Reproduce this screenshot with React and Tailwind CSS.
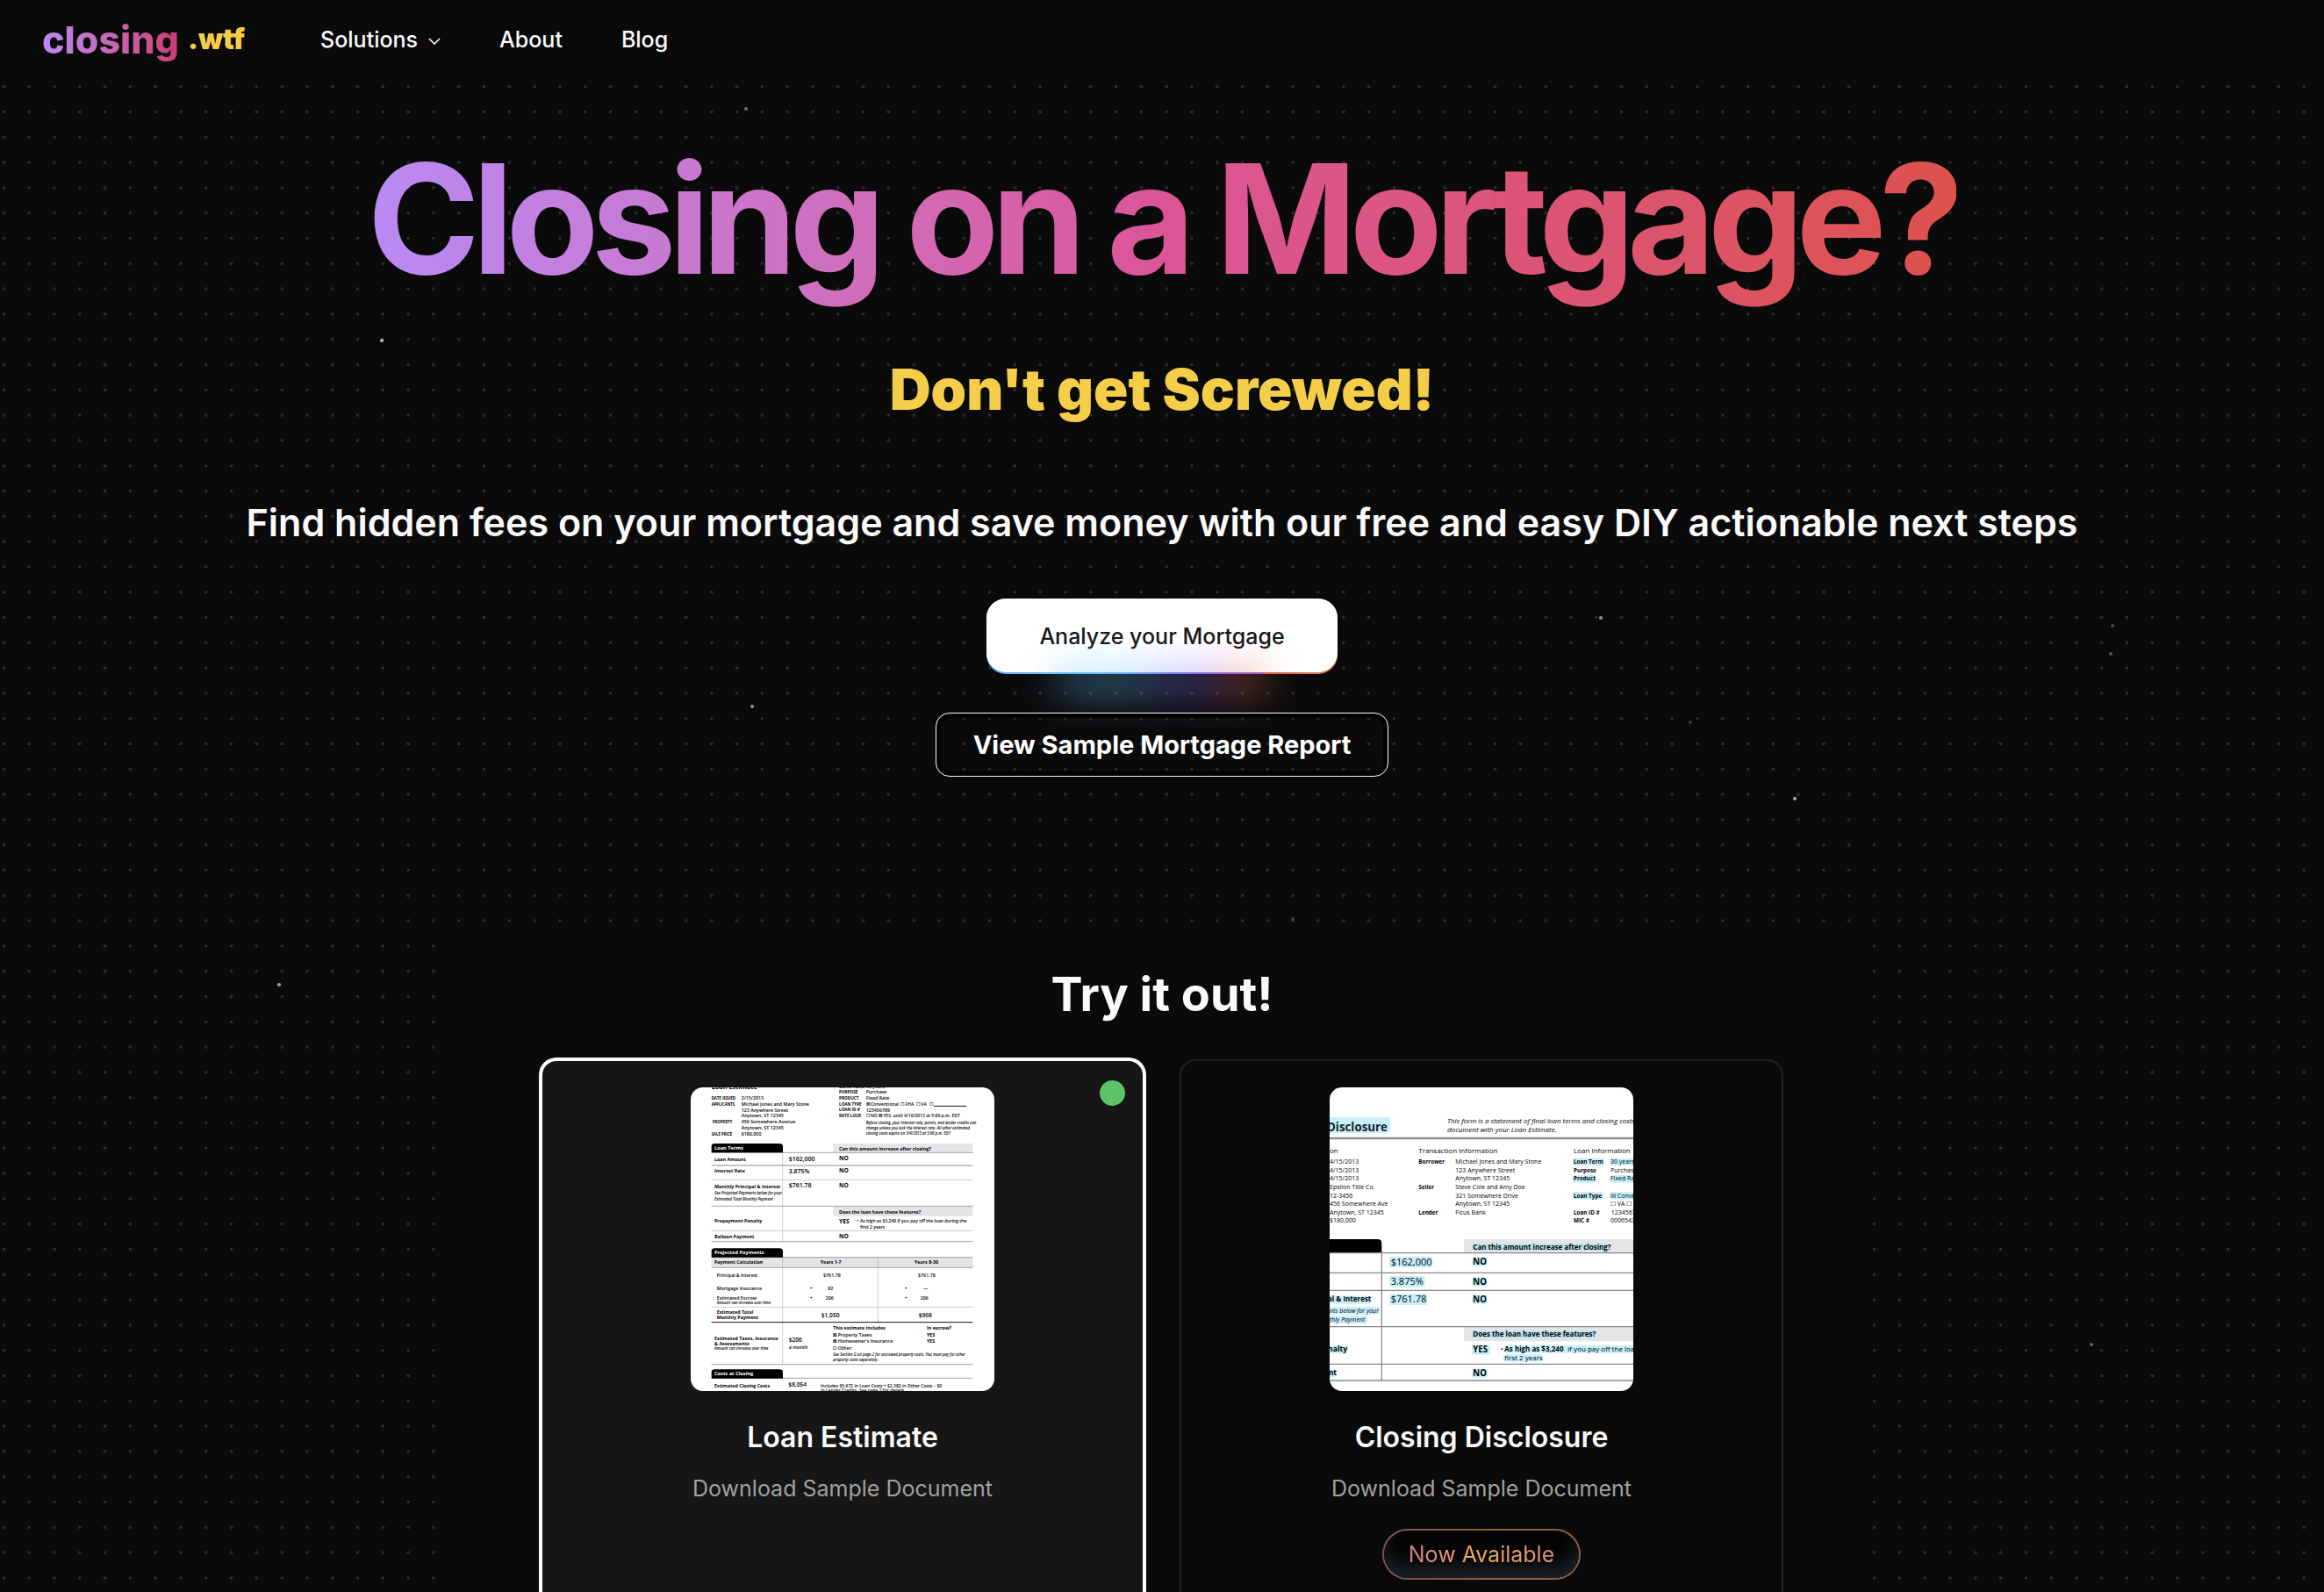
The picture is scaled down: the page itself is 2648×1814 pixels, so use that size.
import React from "react";

const STARS = [
  [850, 124, 0.4], [435, 388, 0.7], [1824, 704, 0.55], [2407, 713, 0.25], [2405, 745, 0.3],
  [857, 805, 0.55], [2045, 910, 0.65], [318, 1122, 0.6], [2383, 1532, 0.35], [1926, 823, 0.2], [1473, 1047, 0.2],
];

function Backdrop() {
  return (
    <svg className="pointer-events-none absolute inset-0 h-full w-full" aria-hidden="true">
      <defs>
        <pattern id="dots" width="28.8" height="28.8" x="-10.05" y="-2.1" patternUnits="userSpaceOnUse">
          <circle cx="14.4" cy="14.4" r="1.7" fill="#303030" />
        </pattern>
      </defs>
      <rect width="100%" height="100%" fill="url(#dots)" />
      {STARS.map(([x, y, o]) => (
        <circle key={`${x}-${y}`} cx={x} cy={y} r="2.1" fill="#ffffff" opacity={o} />
      ))}
    </svg>
  );
}

/* One run of text on a document thumbnail: [x, y, size, text, style] */
function Lines({ items, regular }) {
  return items.map(([x, y, size, text, kind = ""]) => (
    <text
      key={`${x}-${y}-${text}`}
      x={x}
      y={y}
      fontSize={size}
      fontWeight={kind.includes("b") ? 700 : regular}
      fontStyle={kind.includes("i") ? "italic" : "normal"}
      fill={kind.includes("w") ? "#ffffff" : "#000000"}
    >
      {text}
    </text>
  ));
}

const ESTIMATE = [
  [98, 29, 22, "Loan Estimate", "b"],
  [534, 27, 15, "LOAN TERM", "b"], [626, 27, 16, "30 years"],
  [534, 45, 14, "PURPOSE", "b"], [626, 45, 16, "Purchase"],
  [98, 66, 13, "DATE ISSUED", "b"], [200, 66, 16, "2/15/2013"],
  [534, 66, 14, "PRODUCT", "b"], [626, 66, 16, "Fixed Rate"],
  [98, 86, 13, "APPLICANTS", "b"], [200, 87, 16, "Michael Jones and Mary Stone"],
  [534, 86, 14, "LOAN TYPE", "b"], [626, 87, 15, "☒ Conventional"], [745, 87, 15, "☐ FHA"], [798, 87, 15, "☐ VA"], [842, 87, 15, "☐"],
  [200, 107, 16, "123 Anywhere Street"], [534, 106, 14, "LOAN ID #", "b"], [626, 107, 16, "123456789"],
  [200, 127, 16, "Anytown, ST 12345"], [534, 127, 14, "RATE LOCK", "b"], [626, 127, 15, "☐ NO ☒ YES, until 4/16/2013 at 5:00 p.m. EDT"],
  [102, 147, 13, "PROPERTY", "b"], [200, 148, 16, "456 Somewhere Avenue"],
  [626, 150, 13, "Before closing, your interest rate, points, and lender credits can", "i"],
  [200, 168, 16, "Anytown, ST 12345"],
  [626, 168, 13, "change unless you lock the interest rate. All other estimated", "i"],
  [98, 189, 13, "SALE PRICE", "b"], [200, 189, 16, "$180,000"],
  [626, 186, 13, "closing costs expire on 3/4/2013 at 5:00 p.m. EDT", "i"],
  [108, 238, 17, "Loan Terms", "bw"], [534, 240, 16, "Can this amount increase after closing?", "b"],
  [108, 276, 16, "Loan Amount", "b"], [362, 276, 21, "$162,000"], [534, 273, 20, "NO", "b"],
  [108, 315, 16, "Interest Rate", "b"], [362, 318, 21, "3.875%"], [534, 315, 20, "NO", "b"],
  [108, 368, 16, "Monthly Principal & Interest", "b"], [362, 367, 21, "$761.78"], [534, 367, 20, "NO", "b"],
  [108, 391, 13, "See Projected Payments below for your", "i"],
  [108, 410, 13, "Estimated Total Monthly Payment", "i"],
  [534, 455, 16, "Does the loan have these features?", "b"],
  [108, 487, 16, "Prepayment Penalty", "b"], [534, 489, 20, "YES", "b"],
  [594, 487, 16, "•"], [606, 487, 15, "As high as $3,240 if you pay off the loan during the"], [606, 506, 15, "first 2 years"],
  [108, 539, 16, "Balloon Payment", "b"], [534, 541, 20, "NO", "b"],
  [108, 594, 17, "Projected Payments", "bw"],
  [108, 628, 16, "Payment Calculation", "b"], [470, 628, 16, "Years 1-7", "b"], [792, 628, 16, "Years 8-30", "b"],
  [116, 672, 15, "Principal & Interest"], [480, 672, 16, "$761.78"], [804, 672, 16, "$761.78"],
  [116, 717, 16, "Mortgage Insurance"], [434, 717, 16, "+"], [496, 717, 16, "82"], [758, 717, 16, "+"], [822, 717, 16, "—"],
  [116, 749, 16, "Estimated Escrow"], [434, 749, 16, "+"], [488, 749, 16, "206"], [758, 749, 16, "+"], [812, 749, 16, "206"],
  [116, 765, 13, "Amount can increase over time", "i"],
  [116, 799, 16, "Estimated Total", "b"], [116, 816, 16, "Monthly Payment", "b"], [473, 810, 20, "$1,050"], [806, 810, 20, "$968"],
  [514, 852, 16, "This estimate includes", "b"], [834, 852, 16, "In escrow?", "b"],
  [514, 877, 16, "☒ Property Taxes"], [834, 875, 16, "YES", "b"],
  [108, 888, 16, "Estimated Taxes, Insurance", "b"], [362, 895, 20, "$206"],
  [514, 898, 16, "☒ Homeowner's Insurance"], [834, 896, 16, "YES", "b"],
  [108, 905, 16, "& Assessments", "b"], [362, 918, 16, "a month"], [514, 920, 16, "☐ Other:"],
  [108, 921, 13, "Amount can increase over time", "i"],
  [514, 941, 13, "See Section G on page 2 for escrowed property costs. You must pay for other", "i"],
  [514, 959, 13, "property costs separately.", "i"],
  [108, 1009, 17, "Costs at Closing", "bw"],
  [108, 1049, 16, "Estimated Closing Costs", "b"], [361, 1048, 20, "$8,054"],
  [471, 1049, 15, "Includes $5,672 in Loan Costs + $2,382 in Other Costs – $0"],
  [471, 1066, 15, "in Lender Credits. See page 2 for details."],
];

function Tab({ y }) {
  return <path d={`M98 ${y + 31}V${y + 10}Q98 ${y} 110 ${y}H330Q342 ${y} 342 ${y + 10}V${y + 31}Z`} fill="#000000" />;
}

function EstimateThumb() {
  return (
    <svg viewBox="27 24 1038 1038" role="img" aria-label="Loan Estimate sample" className="size-[346px] rounded-[14px] bg-white font-['Open_Sans',sans-serif]">
      <path d="M514 216H991V246H514ZM514 431H991V464H514ZM98 605H991V640H98Z" fill="#e3e4e6" />
      <path d="M98 291H991M98 551H991M98 971H991" stroke="#b4b4b4" strokeWidth="4" />
      <path d="M98 340H991M98 514H991M98 775H991M341 247V551M341 605V827M341 827V971M667 605V826" stroke="#b4b4b4" strokeWidth="2" />
      <path d="M98 247H991M98 430H991M98 605H991M98 640H991M98 1018H991" stroke="#777777" strokeWidth="2" />
      <path d="M98 827H991M858 88H969" stroke="#111111" strokeWidth="3" />
      <Tab y={216} />
      <Tab y={574} />
      <Tab y={988} />
      <Lines items={ESTIMATE} regular={600} />
    </svg>
  );
}

const DISCLOSURE = [
  [450, 177, 24, "This form is a statement of final loan terms and closing costs. Compare this", "i"],
  [450, 207, 24, "document with your Loan Estimate.", "i"],
  [48, 280, 24, "on"], [352, 280, 24, "Transaction  Information"], [882, 280, 24, "Loan  Information"],
  [48, 316, 21, "4/15/2013"], [352, 316, 19, "Borrower", "b"], [478, 316, 21, "Michael Jones and Mary Stone"], [882, 316, 19, "Loan Term", "b"], [1008, 316, 21, "30 years"],
  [48, 344, 21, "4/15/2013"], [478, 344, 21, "123 Anywhere Street"], [882, 344, 19, "Purpose", "b"], [1008, 344, 21, "Purchase"],
  [48, 373, 21, "4/15/2013"], [478, 373, 21, "Anytown, ST 12345"], [882, 373, 19, "Product", "b"], [1008, 373, 21, "Fixed Rate"],
  [48, 403, 21, "Epsilon Title Co."], [352, 403, 19, "Seller", "b"], [478, 403, 21, "Steve Cole and Amy Doe"],
  [48, 431, 21, "12-3456"], [478, 431, 21, "321 Somewhere Drive"], [882, 431, 19, "Loan Type", "b"], [1008, 431, 21, "☒ Conventional"],
  [48, 460, 21, "456 Somewhere Ave"], [478, 460, 21, "Anytown, ST 12345"], [1008, 460, 21, "☐ VA  ☐"],
  [48, 489, 21, "Anytown, ST 12345"], [352, 489, 19, "Lender", "b"], [478, 489, 21, "Ficus Bank"], [882, 489, 19, "Loan ID #", "b"], [1010, 489, 21, "123456789"],
  [48, 517, 21, "$180,000"], [882, 517, 19, "MIC #", "b"], [1008, 517, 21, "000654321"],
  [538, 608, 24, "Can this amount increase after closing?", "b"],
  [257, 662, 33, "$162,000"], [538, 660, 29, "NO", "b"],
  [257, 729, 33, "3.875%"], [538, 728, 29, "NO", "b"],
  [257, 789, 33, "$761.78"], [538, 789, 29, "NO", "b"],
  [42, 787, 24, "al & Interest", "b"], [48, 825, 21, "nts below for your", "i"], [48, 855, 21, "thly Payment", "i"],
  [538, 906, 24, "Does the loan have these features?", "b"],
  [42, 957, 26, "nalty", "b"], [538, 960, 29, "YES", "b"],
  [632, 956, 24, "•"], [646, 956, 24, "As high as $3,240", "b"], [862, 956, 24, "if you pay off the loan"], [646, 986, 24, "first 2 years"],
  [44, 1038, 26, "nt", "b"], [538, 1040, 29, "NO", "b"],
];

const MARKS = [
  [30, 156, 225, 54], [878, 296, 108, 26], [1006, 296, 90, 26], [878, 354, 82, 26], [1006, 354, 90, 26],
  [878, 411, 106, 26], [1006, 411, 90, 26], [534, 588, 470, 25], [252, 632, 148, 38], [534, 636, 54, 30],
  [252, 699, 122, 38], [534, 704, 54, 30], [252, 760, 130, 38], [534, 764, 54, 30], [30, 766, 160, 28],
  [30, 804, 190, 26], [30, 834, 148, 28], [534, 886, 418, 26], [30, 936, 80, 28], [534, 936, 62, 32],
  [644, 936, 460, 26], [642, 966, 134, 26], [30, 1017, 42, 28], [534, 1016, 54, 30],
];

function DisclosureThumb() {
  return (
    <svg viewBox="48 54 1038 1038" role="img" aria-label="Closing Disclosure sample" className="size-[346px] rounded-[14px] bg-white font-['Open_Sans',sans-serif]">
      <path d="M507 573H1090V619H507ZM507 872H1090V922H507Z" fill="#e3e5e7" />
      <g fill="#a5e6f8" opacity="0.6">
        {MARKS.map(([x, y, w, h]) => (
          <rect key={`${x}-${y}`} x={x} y={y} width={w} height={h} rx="7" />
        ))}
      </g>
      <path d="M40 573H212Q226 573 226 588V619H40Z" fill="#000000" />
      <path d="M40 228H1090" stroke="#8e8e8e" strokeWidth="7" />
      <path d="M40 620H1090M40 688H1090M40 748H1090M40 872H1090M40 1000H1090M40 1056H1090M226 615V1058" stroke="#8a8a8a" strokeWidth="4" />
      <text x="246" y="203" textAnchor="end" fontSize="40" fontWeight="700" fill="#16232b">Disclosure</text>
      <Lines items={DISCLOSURE} regular={500} />
    </svg>
  );
}

function SampleCard({ title, thumb, selected, badge }) {
  return (
    <a
      href="#sample"
      className={
        selected
          ? "relative flex flex-col items-center rounded-[18px] border-2 border-white bg-[#161616] px-8 pt-[30px] pb-32 ring-2 ring-white"
          : "relative flex flex-col items-center rounded-[18px] border-2 border-[#222222] bg-[#0a0a0a] px-8 pt-[30px] pb-32"
      }
    >
      {thumb}
      {selected && <span className="absolute top-[22px] right-5 size-[29px] rounded-full bg-[#5dc36a]" />}
      <h3 className="mt-[30px] text-[32px] leading-[46px] font-semibold text-[#fafafa]">{title}</h3>
      <p className="mt-4 text-[25px] leading-[38px] text-[#a1a1a1]">Download Sample Document</p>
      {badge && (
        <span className="mt-[27px] rounded-full bg-linear-to-r from-[#7d5058] via-[#8a6030] to-[#8a6048] p-[2px]">
          <span className="flex h-[54px] items-center rounded-full bg-[#050505] px-7 shadow-[inset_0_-14px_18px_#182026]">
            <span className="bg-linear-to-r from-[#d07a96] via-[#f0ae50] to-[#d88878] bg-clip-text text-[25px] leading-9 text-transparent">
              {badge}
            </span>
          </span>
        </span>
      )}
    </a>
  );
}

export default function App() {
  return (
    <div className="relative h-screen overflow-hidden bg-[#0a0a0a] font-['Inter',sans-serif] text-[#fafafa]">
      <Backdrop />
      <header className="relative flex h-[90px] items-center bg-[#0a0a0a] px-12">
        <a href="#home" className="flex items-center gap-[10px]">
          <span className="bg-linear-to-r from-[#b98af5] to-[#cc3a72] bg-clip-text text-[43px] leading-[60px] font-extrabold text-transparent">closing</span>
          <span className="text-[32px] leading-[60px] font-black text-[#f4ce48]">.wtf</span>
        </a>
        <nav className="ml-[86px] flex items-center gap-[67px] text-[25px] leading-9 font-medium">
          <button type="button" className="flex items-center gap-3">
            Solutions
            <svg width="14" height="8" viewBox="0 0 14 8" fill="none" stroke="currentColor" strokeWidth="1.6" className="mt-1" aria-hidden="true">
              <path d="M1 1L7 7L13 1" />
            </svg>
          </button>
          <a href="#about">About</a>
          <a href="#blog">Blog</a>
        </nav>
      </header>

      <main className="relative flex flex-col items-center">
        <section className="flex flex-col items-center pt-[73px] text-center">
          <h1 className="bg-linear-to-r from-[#b98af5] via-[#db5597] to-[#dd524c] bg-clip-text pb-6 text-[173px] leading-none font-bold tracking-tighter text-transparent">
            Closing on a Mortgage?
          </h1>
          <h2 className="mt-12 text-[65px] leading-[72px] font-black text-[#f4ce48]">Don't get Screwed!</h2>
          <p className="mt-[86px] text-[43px] leading-[58px] font-semibold">
            Find hidden fees on your mortgage and save money with our free and easy DIY actionable next steps
          </p>
          <button type="button" className="relative mt-[58px] h-[86px] w-[400px] rounded-[22px] bg-[linear-gradient(90deg,#60a8f5,#68c8f5_30%,#7a80f0_55%,#a452e0_79%,#e06050_79%,#d08a50)] pb-[2px]">
            <span className="flex h-full items-center justify-center rounded-[22px] bg-white pt-[3px] text-[25px] font-medium text-[#171717]">
              Analyze your Mortgage
            </span>
            <span className="absolute -bottom-[17px] left-1/5 h-[17px] w-3/5 bg-[linear-gradient(90deg,#60b0ff,#68d0ff_30%,#7a80ff_55%,#a452ff_79%,#ff6050_79%,#e08a50)] opacity-85 blur-[23px]" />
          </button>
          <button type="button" className="relative mt-11 h-[73px] rounded-2xl border border-white px-[42px] text-[29px] font-bold text-white shadow-[inset_0_0_0_5px_#000000]">
            View Sample Mortgage Report
          </button>
        </section>

        <section className="mt-[178px] w-full max-w-[1608px] bg-[#0a0a0a] px-24 pt-10">
          <h2 className="text-center text-[54px] leading-[60px] font-bold">Try it out!</h2>
          <div className="mt-11 grid grid-cols-2 gap-10">
            <SampleCard title="Loan Estimate" thumb={<EstimateThumb />} selected />
            <SampleCard title="Closing Disclosure" thumb={<DisclosureThumb />} badge="Now Available" />
          </div>
        </section>
      </main>
    </div>
  );
}
